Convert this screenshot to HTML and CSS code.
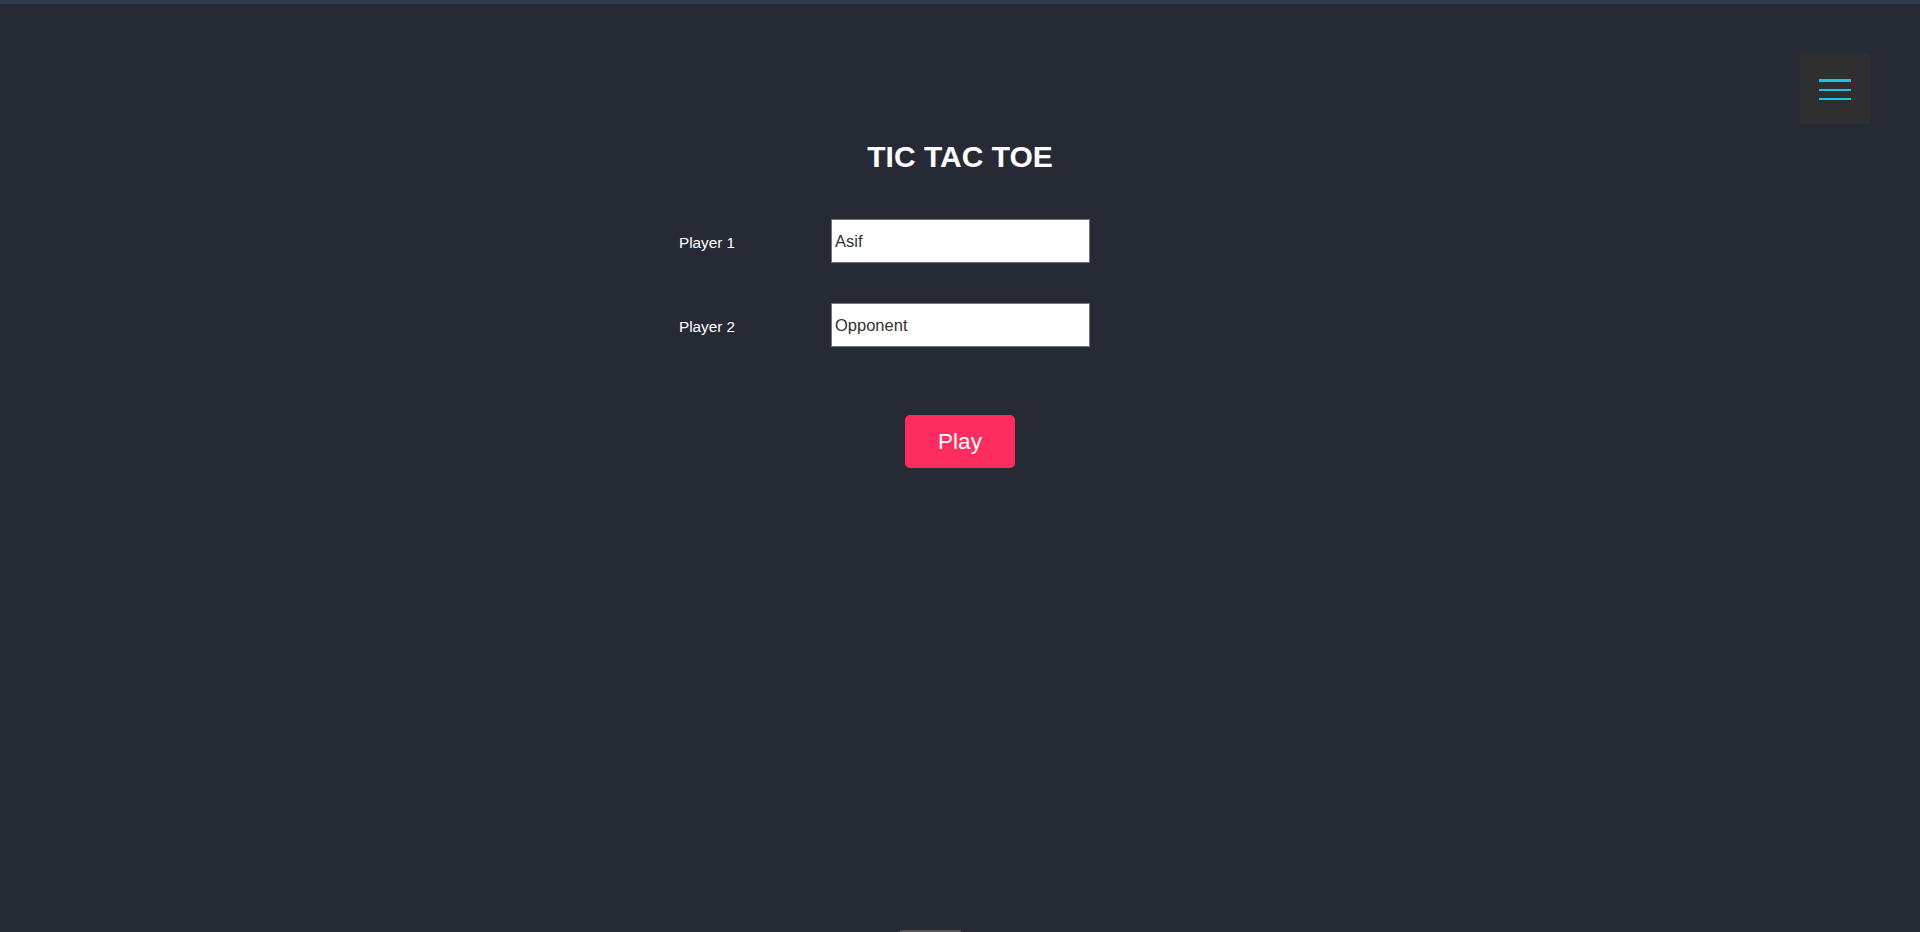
FILE: index.html
```html
<!DOCTYPE html>
<html lang="en">
<head>
<meta charset="utf-8">
<title>Tic Tac Toe</title>
<link rel="stylesheet" href="styles.css">
</head>
<body>
  <div class="topbar"></div>
  <button class="menu-btn" aria-label="Menu">
    <span class="menu-line thick"></span>
    <span class="menu-line"></span>
    <span class="menu-line"></span>
  </button>
  <main class="main">
    <h1 class="title">TIC TAC TOE</h1>
    <form class="players">
      <label class="player-label" for="p1">Player 1</label>
      <input class="player-input" id="p1" type="text" value="Asif">
      <label class="player-label" for="p2">Player 2</label>
      <input class="player-input" id="p2" type="text" value="Opponent">
    </form>
    <div class="actions">
      <button class="play-btn" type="button">Play</button>
    </div>
  </main>
  <div class="bottom-handle"></div>
</body>
</html>
```

FILE: styles.css
```css
html, body {
  margin: 0;
  padding: 0;
  height: 100%;
}

body {
  background: #262a35;
  font-family: "Liberation Sans", Arial, sans-serif;
  color: #ffffff;
  overflow: hidden;
  position: relative;
}

.topbar {
  height: 4px;
  background: #2e3e4b;
}

.menu-btn {
  position: absolute;
  top: 54px;
  right: 50px;
  width: 70px;
  height: 70px;
  background: #2f2f30;
  border: none;
  padding: 0;
  display: flex;
  flex-direction: column;
  align-items: center;
  justify-content: center;
  gap: 7px;
  cursor: pointer;
}

.menu-line {
  display: block;
  width: 32px;
  height: 2px;
  background: #1ec2e3;
}

.menu-line.thick {
  height: 3px;
}

.main {
  padding-top: 137px;
}

.title {
  margin: 0;
  text-align: center;
  font-size: 30px;
  line-height: 32px;
  font-weight: bold;
  color: #ffffff;
}

.players {
  margin: 46px 0 0 calc(50% - 281px);
  display: grid;
  grid-template-columns: 152px 259px;
  row-gap: 40px;
  align-items: center;
}

.player-label {
  font-size: 15.3px;
  padding-top: 4px;
  color: #ffffff;
}

.player-input {
  box-sizing: border-box;
  width: 259px;
  height: 44px;
  margin: 0;
  padding: 0 3px;
  border: 1px solid #767676;
  background: #ffffff;
  color: #333333;
  font-family: "Liberation Sans", Arial, sans-serif;
  font-size: 16.5px;
  outline: none;
}

.actions {
  display: flex;
  justify-content: center;
  margin-top: 68px;
}

.play-btn {
  width: 110px;
  height: 53px;
  border: none;
  border-radius: 5px;
  background: #ff2d5f;
  color: #ffffff;
  font-family: "Liberation Sans", Arial, sans-serif;
  font-size: 22.5px;
  cursor: pointer;
}

.bottom-handle {
  position: absolute;
  left: 900px;
  bottom: 0;
  width: 61px;
  height: 2px;
  background: #555558;
}
```
